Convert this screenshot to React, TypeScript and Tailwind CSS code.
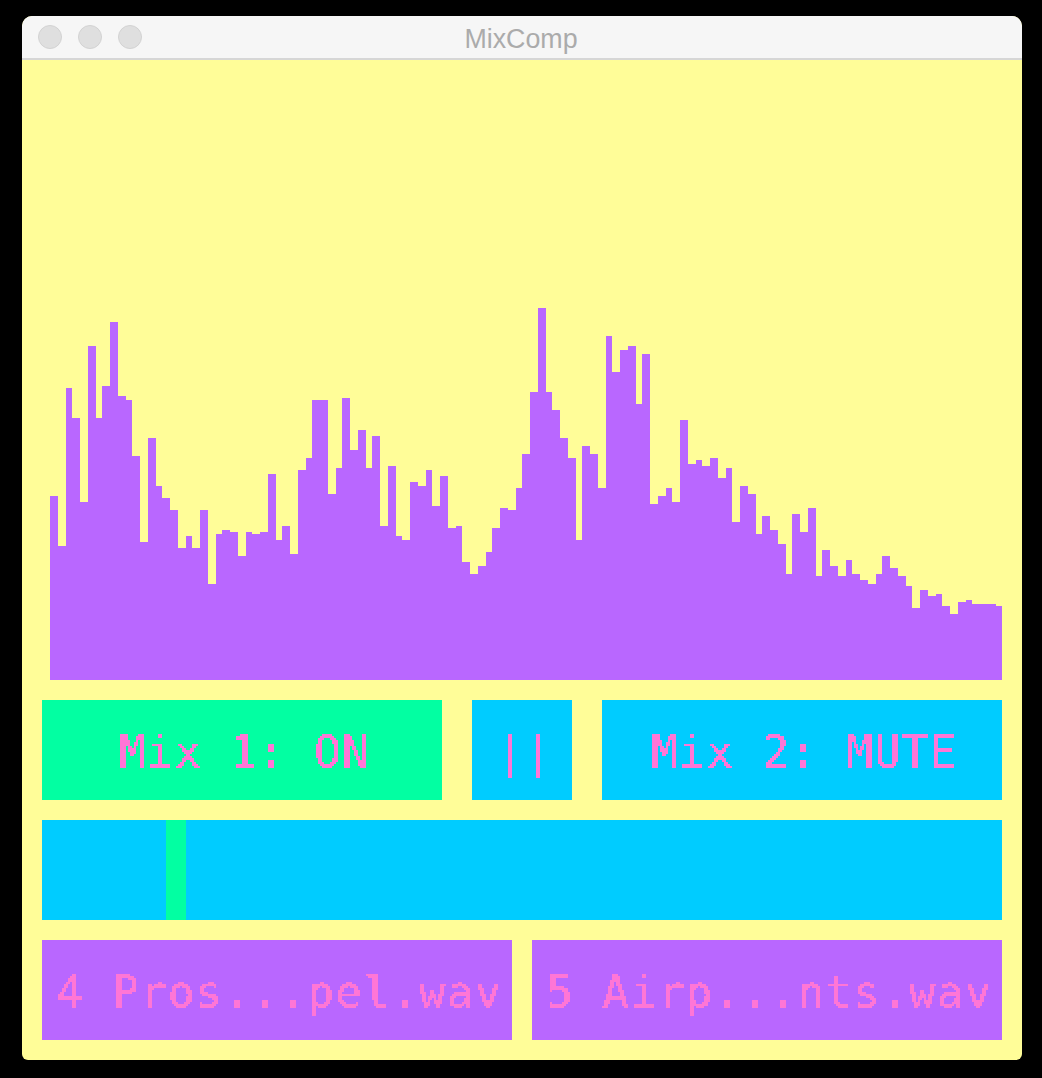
const tops = [
  588, 738, 264, 354, 606, 138, 354, 258, 66, 288, 300, 468, 726, 414, 558, 594, 630, 744, 708, 744, 630, 852, 702, 690, 696, 768, 696, 702, 696, 522, 720, 678, 762, 510, 474, 300, 300, 582, 504, 294, 450,
  390, 504, 408, 678, 498, 708, 720, 546, 558, 510, 618, 528, 684, 678, 786, 822, 798, 756, 684, 624, 630, 564, 462, 276, 24, 276, 330, 414, 474, 720, 438, 462, 564, 108, 216, 150, 138, 312, 162, 612, 588, 564, 606,
  360, 492, 480, 498, 474, 534, 504, 666, 558, 582, 702, 648, 690, 732, 822, 642, 696, 624, 828, 750, 798, 828, 780, 822, 840, 852, 822, 768, 804, 828, 858, 924, 870, 888, 882, 918, 942, 906, 900, 912, 912, 912, 918,
];

const textCls =
  "w-full h-full flex items-center justify-center pl-[4px] pt-[3px] font-['DejaVu_Sans_Mono',monospace] text-[44px] tracking-[1.4px] leading-none text-[#ff76d6] whitespace-pre [filter:url(#pix)]";

function Light() {
  return <div className="w-6 h-6 rounded-full bg-[#dfdfdf] border border-[#d2d2d2]" />;
}

function Btn({ label, cls }: { label: string; cls: string }) {
  return (
    <div className={`h-[100px] ${cls}`}>
      <div className={textCls}>{label}</div>
    </div>
  );
}

export default function App() {
  return (
    <div className="w-[1042px] h-[1078px] bg-black pt-4 px-[20px] overflow-hidden">
      <svg className="absolute w-0 h-0" aria-hidden="true">
        <filter id="pix" x="0" y="0" width="100%" height="100%" colorInterpolationFilters="sRGB">
          <feFlood x="0" y="0" width="1" height="1" floodColor="#000" result="dot" />
          <feComposite in="dot" in2="dot" x="0" y="0" width="2" height="2" operator="over" result="cell" />
          <feTile in="cell" result="grid" />
          <feComposite in="SourceGraphic" in2="grid" operator="in" result="sampled" />
          <feConvolveMatrix
            in="sampled"
            order="2"
            kernelMatrix="1 1 1 1"
            divisor="1"
            targetX="1"
            targetY="1"
            edgeMode="none"
            preserveAlpha="false"
            result="blocks"
          />
          <feComponentTransfer in="blocks">
            <feFuncA type="discrete" tableValues="0 1 1 1" />
          </feComponentTransfer>
        </filter>
      </svg>
      <div className="ml-[2px] w-[1000px] h-[1044px] rounded-t-[10px] rounded-b-[6px] overflow-hidden bg-[#fffd98] flex flex-col">
        <div className="relative h-11 shrink-0 bg-[#f6f6f6] border-b-2 border-[#d6d6d6] flex items-center pl-4 gap-4">
          <Light />
          <Light />
          <Light />
          <div className="absolute inset-0 pt-[5px] pr-[2px] flex items-center justify-center font-['Liberation_Sans',sans-serif] text-[26.8px] text-[#ababab]">
            MixComp
          </div>
        </div>
        <div className="flex-1 flex flex-col px-5 pb-5 gap-5">
          <div className="flex-1 flex items-end pl-2">
            {tops.map((t, i) => (
              <div
                key={i}
                className="bg-[#b967ff]"
                style={{ width: i % 4 === 2 ? 6 : 8, height: 380 - t / 3 }}
              />
            ))}
          </div>
          <div className="flex gap-[30px]">
            <Btn label="Mix 1: ON" cls="w-[400px] bg-[#02ffa2]" />
            <Btn label="||" cls="w-[100px] bg-[#00ccff]" />
            <Btn label="Mix 2: MUTE" cls="w-[400px] bg-[#00ccff]" />
          </div>
          <div className="h-[100px] bg-[#00ccff] pl-[124px]">
            <div className="w-5 h-full bg-[#02ffa2]" />
          </div>
          <div className="flex gap-5">
            <Btn label="4 Pros...pel.wav" cls="flex-1 bg-[#b967ff]" />
            <Btn label="5 Airp...nts.wav" cls="flex-1 bg-[#b967ff]" />
          </div>
        </div>
      </div>
    </div>
  );
}
